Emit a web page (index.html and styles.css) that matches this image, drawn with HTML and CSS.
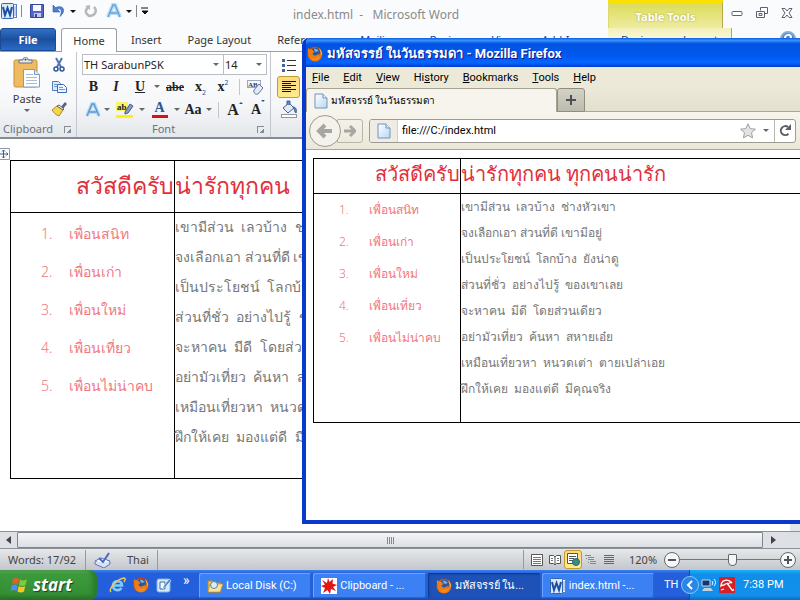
FILE: index.html
```html
<!DOCTYPE html>
<html lang="th">
<head>
<meta charset="utf-8">
<title>index.html - Microsoft Word</title>
<link rel="stylesheet" href="styles.css">
</head>
<body>
<svg class="defs" aria-hidden="true">
  <defs>
    <linearGradient id="gPage" x1="0" y1="0" x2="1" y2="1"><stop offset="0" stop-color="#fff"/><stop offset="1" stop-color="#b9d6f2"/></linearGradient>
    <radialGradient id="gFox" cx=".5" cy=".6" r=".6"><stop offset="0" stop-color="#ffc52e"/><stop offset=".6" stop-color="#f07a12"/><stop offset="1" stop-color="#c23c05"/></radialGradient>
    <symbol id="page" viewBox="0 0 14 16"><path d="M1 1h8l4 4v10H1z" fill="url(#gPage)" stroke="#6f94c4"/><path d="M9 1v4h4" fill="#dcebfa" stroke="#6f94c4"/></symbol>
    <symbol id="fox" viewBox="0 0 16 16"><circle cx="8" cy="8" r="7.5" fill="url(#gFox)"/><circle cx="8.4" cy="6.6" r="4.8" fill="#2c56a0"/><path d="M7 2.5c2 0 4 1 5 3-1-.5-2-.2-2.500.5C8.500 6 7 5 7 2.500z" fill="#6fb4e8"/><path d="M1 2c.8 1 1.700 1.300 3 1.300C5 3.300 5.500 4 6.500 5 8 5.500 7.500 6.500 6 7c-1 1 .5 2.500 2 2.500S11.500 8 12.500 7.500C12 11 9.500 13 7 12.500 3 12 0 8 1 2z" fill="#ef7c13"/><path d="M12 2c2.500 2 3.500 5 2.500 8-.5-3-1-5-2.500-8z" fill="#ffd24a"/></symbol>
    <symbol id="word" viewBox="0 0 16 16"><rect x="4.500" y="1.500" width="11" height="13" fill="#fff" stroke="#5d83bd"/><path d="M13 4h2M13 6h2M13 8h2M13 10h2M13 12h2" stroke="#7da0d2"/><rect x=".5" y=".5" width="12" height="15" rx="1" fill="#d9e9fb" stroke="#3567b0"/><path d="M2 4l2 8 2.500-7L9 12l2-8" fill="none" stroke="#1c4f9f" stroke-width="2"/></symbol>
  </defs>
</svg>
<main class="desktop">
  <section class="word" aria-label="Microsoft Word">
    <header class="word-title">
      <div class="quick">
        <svg width="16" height="16"><use href="#word"/></svg>
        <i class="bar"></i>
        <button class="gap" aria-label="Save"><svg width="14" height="14" viewBox="0 0 14 14"><path d="M.5.5h13v13h-13z" fill="#5766c6" stroke="#37449c"/><path d="M3 1h8v6H3z" fill="#f6f8ff"/><path d="M4 9h7v4H4z" fill="#c3c9ea"/><path d="M5 10h2v3H5z" fill="#37449c"/></svg></button>
        <button class="gap" aria-label="Undo"><svg width="14" height="14" viewBox="0 0 14 14"><path d="M1 1v7h7L5.500 5.500C8 3.500 11 6 8 12.500 14 8 12.500 0 3.500 3.500z" fill="#4d7fd3" stroke="#2c58ac" stroke-width=".6"/></svg></button>
        <i class="arrow dark"></i>
        <button class="gap" aria-label="Repeat"><svg width="14" height="14" viewBox="0 0 14 14"><path d="M4 3.500C-1 8 4 13 8 11.500c4-1 5-6 2-8.500" fill="none" stroke="#b5b8bc" stroke-width="2.500"/><path d="M6 1v5L1 2z" fill="#b5b8bc"/></svg></button>
        <button class="gap" aria-label="Text Effects"><svg width="16" height="16" viewBox="0 0 16 16"><path d="M2 14L7 2h2l5 12M4.500 10h7" fill="none" stroke="#b9dcf5" stroke-width="4"/><path d="M2 14L7 2h2l5 12M4.500 10h7" fill="none" stroke="#6aa5d8" stroke-width="1.500"/></svg></button>
        <i class="arrow dark"></i>
        <i class="bar"></i>
        <svg width="8" height="8" viewBox="0 0 8 8"><path d="M0 1h7M1 4h6L4 7z" stroke="#111" fill="#111"/></svg>
      </div>
      <h1>index.html&nbsp; -&nbsp; &nbsp;Microsoft Word</h1>
      <strong class="context">Table Tools</strong>
      <div class="controls">
        <button aria-label="Minimize"><svg width="12" height="12" viewBox="0 0 12 12"><rect x="1" y="4.500" width="10" height="4" rx="1" fill="#fff" stroke="#596273"/></svg></button>
        <button aria-label="Restore"><svg width="12" height="12" viewBox="0 0 12 12"><path d="M4.500 3.500v-3h7v6h-3" fill="#fff" stroke="#596273"/><path d="M.5 4.500h8v6h-8z" fill="#fff" stroke="#596273"/><path d="M3 6.500h3v2H3z" fill="none" stroke="#596273"/></svg></button>
        <button aria-label="Close"><svg width="12" height="12" viewBox="0 0 12 12"><path d="M1 1.500h3l2 2.500 2-2.500h3L8 6l3 4.500H8L6 8l-2 2.500H1L4 6z" fill="#fff" stroke="#596273"/></svg></button>
      </div>
    </header>
    <nav class="tabs">
      <button class="file">File</button>
      <button class="home">Home</button>
      <button>Insert</button>
      <button>Page Layout</button>
      <button>References</button>
      <button class="blue">Mailings</button>
      <button class="blue">Review</button>
      <button class="blue">View</button>
      <button class="blue">Add-Ins</button>
      <span class="tool-tabs"><button class="blue">Design</button><button class="blue">Layout</button></span>
      <button class="help" aria-label="Help"><svg width="16" height="16" viewBox="0 0 16 16"><circle cx="8" cy="8" r="7" fill="#4d83cd" stroke="#88abd9" stroke-width="2"/><path d="M5 7c0-4 6-4 6-1 0 2-3 2-3 4v2" fill="none" stroke="#fff" stroke-width="2"/></svg></button>
    </nav>
    <div class="ribbon">
      <section class="group clipboard">
        <div class="clip-body">
          <button class="paste">
            <svg width="28" height="32" viewBox="0 0 28 32"><rect x="1" y="3" width="23" height="27" rx="1.500" fill="#eebb62" stroke="#c98f34"/><path d="M6 6V3h4c0-4 5-4 5 0h4v3z" fill="#e4e6e9" stroke="#6c7179"/><circle cx="12.500" cy="2.500" r="1" fill="#444"/><path d="M10.500 12.500h11l5 5V30h-16z" fill="#fff" stroke="#7b9cc6"/><path d="M21.500 12.500v5h5" fill="#dce9f8" stroke="#7b9cc6"/><path d="M13 17.500h7M13 20.500h11M13 23.500h11M13 26.500h11" stroke="#a9bddb"/></svg>
            <span>Paste</span><i class="arrow"></i>
          </button>
          <div class="small-tools">
            <button aria-label="Cut"><svg width="16" height="16" viewBox="0 0 16 16"><path d="M5 1l5 9M11 1L6 10" stroke="#4d77b6" stroke-width="2"/><circle cx="5" cy="12" r="2" fill="none" stroke="#2d5598" stroke-width="1.500"/><circle cx="11" cy="12" r="2" fill="none" stroke="#2d5598" stroke-width="1.500"/></svg></button>
            <button aria-label="Copy"><svg width="16" height="16" viewBox="0 0 16 16"><path d="M1.500 2.500h6l2 2v7h-8z" fill="#dceafb" stroke="#4e7dc0"/><path d="M6.500 5.500h6l3 3v5h-9z" fill="#eef5ff" stroke="#3c6cb4"/><path d="M3 5.500h3M3 7.500h3M8 8.500h4M8 10.500h6" stroke="#6f97d0"/></svg></button>
            <button aria-label="Format Painter"><svg width="16" height="16" viewBox="0 0 16 16"><path d="M9 7l5-6 2 2-5 6z" fill="#56637c"/><path d="M1 9l5-4 6 4-4 6c-3-1-5-3-7-6z" fill="#f5d64b" stroke="#a88b28"/><path d="M6 5l2-1 5 4-1 1z" fill="#fff" stroke="#666"/></svg></button>
          </div>
        </div>
        <h2>Clipboard <i class="launcher"></i></h2>
      </section>
      <section class="group font">
        <div class="combos">
          <label class="combo family"><select aria-label="Font"><option>TH SarabunPSK</option></select><i class="arrow"></i></label>
          <label class="combo size"><select aria-label="Font Size"><option>14</option></select><i class="arrow"></i></label>
        </div>
        <div class="tools row-a">
          <button><b>B</b></button><button><em>I</em></button><button><u>U</u></button><i class="arrow"></i><button class="abc"><s>abe</s></button><button>x<sub>2</sub></button><button>x<sup>2</sup></button><i class="divider"></i>
          <button aria-label="Clear Formatting"><svg width="18" height="18" viewBox="0 0 18 18"><rect x="1.500" y="2.500" width="13" height="7" fill="#f4f6fb" stroke="#9aa7be"/><text x="2" y="9" font-size="7" font-weight="bold" fill="#34405c">AB</text><path d="M8 12l5-6 4 4-5 6c-2 1-5-1-4-4z" fill="#e4e9f7" stroke="#6476a5"/></svg></button>
        </div>
        <div class="tools row-b">
          <button aria-label="Text Effects"><svg width="16" height="16" viewBox="0 0 16 16"><path d="M2 14L7 2h2l5 12M4.500 10h7" fill="none" stroke="#b9dcf5" stroke-width="4"/><path d="M2 14L7 2h2l5 12M4.500 10h7" fill="none" stroke="#5b9bd2" stroke-width="1.500"/></svg></button><i class="arrow"></i>
          <button class="hl" aria-label="Highlight"><svg width="18" height="18" viewBox="0 0 18 18"><path d="M0 1h12v9H0z" fill="#f8f36a"/><path d="M0 14h17v3H0z" fill="#fbf300"/><text x="1" y="9" font-size="9" fill="#222">ab</text><path d="M9 11l5-8 3 2-5 7-3 1z" fill="#879bc7" stroke="#485b85"/></svg></button><i class="arrow"></i>
          <button class="color">A</button><i class="arrow"></i>
          <button>Aa</button><i class="arrow"></i><i class="divider"></i>
          <button class="grow">A<i class="tri up"></i></button>
          <button class="shrink">A<i class="tri down"></i></button>
        </div>
        <h2>Font <i class="launcher"></i></h2>
      </section>
      <section class="group paragraph">
        <button aria-label="Bullets"><svg width="16" height="16" viewBox="0 0 16 16"><path d="M6 3.500h9M6 8.500h9M6 13.500h9" stroke="#333"/><path d="M1 2h3v3H1zM1 7h3v3H1zM1 12h3v3H1z" fill="#47639b"/></svg></button>
        <button class="on" aria-label="Align Left"><svg width="16" height="14" viewBox="0 0 16 14"><path d="M1 1.500h14M1 3.500h9M1 5.500h14M1 7.500h9M1 9.500h14M1 11.500h9" stroke="#111"/></svg></button>
        <button aria-label="Shading"><svg width="18" height="18" viewBox="0 0 18 18"><path d="M3 8l6-5 5 5-6 5z" fill="#e1eaf6" stroke="#45628f"/><path d="M7 5V1h3v4M13 7c3 0 4 3 3 6-2-1-1-4-3-6z" fill="#6287c2" stroke="#45628f"/><rect x="1.500" y="14.500" width="15" height="3" fill="#fff" stroke="#8d96a5"/></svg></button>
      </section>
    </div>
    <div class="paper">
      <div class="sheet">
        <svg class="handle" width="10" height="12" viewBox="0 0 10 12"><path d="M0 .5h9.500v11H0" fill="#fff" stroke="#8c9cb5"/><path d="M3.500 2v8M0 6h8M2 3.500L3.500 2 5 3.500M2 8.500L3.500 10 5 8.500M6.500 4.500L8 6 6.500 7.500" fill="none" stroke="#3a5b96"/></svg>
        <table class="poem">
          <tr><th>สวัสดีครับ</th><th>น่ารักทุกคน</th></tr>
          <tr>
            <td><ol><li>เพื่อนสนิท</li><li>เพื่อนเก่า</li><li>เพื่อนใหม่</li><li>เพื่อนเที่ยว</li><li>เพื่อนไม่น่าคบ</li></ol></td>
            <td><p>เขามีส่วน &nbsp;เลวบ้าง &nbsp;ช่างหัวเขา</p><p>จงเลือกเอา ส่วนที่ดี เขามีอยู่</p><p>เป็นประโยชน์ &nbsp;โลกบ้าง &nbsp;ยังน่าดู</p><p>ส่วนที่ชั่ว &nbsp;อย่างไปรู้ &nbsp;ของเขาเลย</p><p>จะหาคน &nbsp;มีดี &nbsp;โดยส่วนเดียว</p><p>อย่ามัวเที่ยว &nbsp;ค้นหา &nbsp;สหายเอ๋ย</p><p>เหมือนเที่ยวหา &nbsp;หนวดเต่า &nbsp;ตายเปล่าเอย</p><p>ฝึกให้เคย &nbsp;มองแต่ดี &nbsp;มีคุณจริง</p></td>
          </tr>
        </table>
      </div>
      <div class="vscroll"></div>
    </div>
    <div class="hscroll">
      <button aria-label="Scroll left"><i class="side left"></i></button>
      <div class="thumb"><i></i><i></i><i></i><i></i></div>
      <button aria-label="Scroll right"><i class="side right"></i></button>
    </div>
    <footer class="status">
      <span class="words">Words: 17/92</span>
      <span class="proof"><svg width="18" height="16" viewBox="0 0 18 16"><path d="M1 9l6-3 9 3-6 5z" fill="#fff" stroke="#6272ae"/><path d="M1 10v2l9 4 6-4v-2" fill="#dce2f5" stroke="#6272ae"/><path d="M5 6l4 4 6-9" fill="none" stroke="#4b6ac0" stroke-width="2"/></svg></span>
      <span class="lang">Thai</span>
      <div class="views">
        <button aria-label="Print Layout"><svg width="12" height="12" viewBox="0 0 12 12"><path d="M.5.500h11v11H.5z" fill="#fff" stroke="#555"/><path d="M2 3.500h8M2 5.500h8M2 7.500h8M2 9.500h8" stroke="#777"/></svg></button>
        <button aria-label="Full Screen Reading"><svg width="12" height="12" viewBox="0 0 12 12"><path d="M.5 1.500h4L6 3l1.500-1.500h4v8h-4L6 11 4.500 9.500h-4zM6 3v8" fill="#fff" stroke="#555"/><path d="M2 4.500h2M2 6.500h2M8 4.500h2M8 6.500h2" stroke="#777"/></svg></button>
        <button class="on" aria-label="Web Layout"><svg width="13" height="13" viewBox="0 0 13 13"><path d="M.5.500h10v10H.5z" fill="#fff" stroke="#555"/><path d="M2 3.500h7M2 5.500h5M2 7.500h4" stroke="#555"/><circle cx="9" cy="9" r="3.500" fill="#3d8f72" stroke="#2564a4"/></svg></button>
        <button aria-label="Outline"><svg width="12" height="12" viewBox="0 0 12 12"><path d="M0 1.500h6M3 3.500h6M3 5.500h6M5 7.500h6M5 9.500h6M1 4.500h1M3 8.500h1" stroke="#888"/></svg></button>
        <button aria-label="Draft"><svg width="12" height="12" viewBox="0 0 12 12"><path d="M1 1.500h10M1 3.500h10M1 5.500h10M1 7.500h10M1 9.500h10" stroke="#666"/></svg></button>
      </div>
      <span class="percent">120%</span>
      <button class="round" aria-label="Zoom Out"><svg width="16" height="16" viewBox="0 0 16 16"><circle cx="8" cy="8" r="7.500" fill="#f7f8f9" stroke="#63676c"/><path d="M4 8h8" stroke="#555" stroke-width="2"/></svg></button>
      <input type="range" min="0" max="100" value="53" aria-label="Zoom">
      <button class="round" aria-label="Zoom In"><svg width="16" height="16" viewBox="0 0 16 16"><circle cx="8" cy="8" r="7.500" fill="#f7f8f9" stroke="#63676c"/><path d="M4 8h8M8 4v8" stroke="#555" stroke-width="2"/></svg></button>
    </footer>
  </section>

  <section class="firefox" aria-label="Mozilla Firefox">
    <header class="ff-title"><svg width="16" height="16"><use href="#fox"/></svg><h1>มหัสจรรย์ ในวันธรรมดา - Mozilla Firefox</h1></header>
    <nav class="menu"><button><u>F</u>ile</button><button><u>E</u>dit</button><button><u>V</u>iew</button><button>Hi<u>s</u>tory</button><button><u>B</u>ookmarks</button><button><u>T</u>ools</button><button><u>H</u>elp</button></nav>
    <div class="ff-tabs">
      <button class="ff-tab"><svg width="14" height="16"><use href="#page"/></svg>มหัสจรรย์ ในวันธรรมดา</button>
      <button class="new" aria-label="New Tab"><svg width="12" height="12" viewBox="0 0 12 12"><path d="M1 6h10M6 1v10" stroke="#4b4f55" stroke-width="2"/></svg></button>
    </div>
    <div class="ff-bar">
      <button class="back" aria-label="Back"><svg width="18" height="18" viewBox="0 0 18 18"><path d="M9 3L3 9l6 6M4 9h12" fill="none" stroke="#a6a6a2" stroke-width="4"/></svg></button>
      <button class="fwd" aria-label="Forward"><svg width="12" height="14" viewBox="0 0 12 14"><path d="M6 2l5 5-5 5M0 7h10" fill="none" stroke="#a6a6a2" stroke-width="3"/></svg></button>
      <div class="url">
        <span class="ident"><svg width="14" height="16"><use href="#page"/></svg></span>
        <input type="text" value="file:///C:/index.html" aria-label="Address">
        <svg width="16" height="16" viewBox="0 0 16 16"><path d="M8 .8l2.200 4.800 5.200.6-3.900 3.500 1.100 5.200L8 12.300l-4.600 2.600 1.100-5.200L.6 6.200l5.200-.6z" fill="#e3e3e3" stroke="#9f9f9f"/></svg>
        <i class="arrow"></i>
        <button class="reload" aria-label="Reload"><svg width="13" height="13" viewBox="0 0 13 13"><path d="M9.500 9.800A4.500 4.500 0 1 1 9 3" fill="none" stroke="#5c6066" stroke-width="2"/><path d="M12 0v6H6z" fill="#5c6066"/></svg></button>
      </div>
    </div>
    <div class="ff-page">
      <table class="poem">
        <tr><th>สวัสดีครับ</th><th>น่ารักทุกคน ทุกคนน่ารัก</th></tr>
        <tr>
          <td><ol><li>เพื่อนสนิท</li><li>เพื่อนเก่า</li><li>เพื่อนใหม่</li><li>เพื่อนเที่ยว</li><li>เพื่อนไม่น่าคบ</li></ol></td>
          <td><p>เขามีส่วน &nbsp;เลวบ้าง &nbsp;ช่างหัวเขา</p><p>จงเลือกเอา ส่วนที่ดี เขามีอยู่</p><p>เป็นประโยชน์ &nbsp;โลกบ้าง &nbsp;ยังน่าดู</p><p>ส่วนที่ชั่ว &nbsp;อย่างไปรู้ &nbsp;ของเขาเลย</p><p>จะหาคน &nbsp;มีดี &nbsp;โดยส่วนเดียว</p><p>อย่ามัวเที่ยว &nbsp;ค้นหา &nbsp;สหายเอ๋ย</p><p>เหมือนเที่ยวหา &nbsp;หนวดเต่า &nbsp;ตายเปล่าเอย</p><p>ฝึกให้เคย &nbsp;มองแต่ดี &nbsp;มีคุณจริง</p></td>
        </tr>
      </table>
    </div>
  </section>

  <footer class="taskbar">
    <button class="start"><svg width="18" height="18" viewBox="0 0 18 18"><path d="M3 3c2-1.500 4-1.500 6 0L8 8.500c-2-1.500-4-1.500-6 0z" fill="#ee5b2a"/><path d="M10 3.500c2 1.300 4 1.300 7 0L15.500 9c-2 1.300-4.500 1.300-6.500 0z" fill="#7fcb3c"/><path d="M1.700 9.500c2-1.500 4-1.500 6 0l-1.200 5.500c-2-1.500-4-1.500-6 0z" fill="#4f8df0"/><path d="M8.700 10c2 1.300 4.500 1.300 6.500 0L14 15.500c-2 1.300-4.500 1.300-6.500 0z" fill="#fbc722"/></svg>start</button>
    <div class="launch">
      <button aria-label="Internet Explorer"><svg width="17" height="16" viewBox="0 0 17 16"><path d="M4 8.500h9C13 3 4.500 2.500 4 8.500c0 5 6 6 8.500 2.500" fill="none" stroke="#7ecbff" stroke-width="2.600"/><path d="M2 15C-1 12 8 2 15 1c2 0 1 2.500 0 4" fill="none" stroke="#f1c84a" stroke-width="1.500"/></svg></button>
      <button aria-label="Firefox"><svg width="16" height="16"><use href="#fox"/></svg></button>
      <button aria-label="Show Desktop"><svg width="16" height="16" viewBox="0 0 16 16"><rect x="1" y="2" width="13" height="13" rx="2" fill="#d6eafa" stroke="#7fb6e4"/><path d="M4 5h5v7H4z" fill="#fff" stroke="#316bab"/><path d="M7 10l6-8 2 1.500-6 7-2 1z" fill="#4d83c4" stroke="#fff" stroke-width=".5"/></svg></button>
      <span>»</span>
    </div>
    <div class="tasks">
      <button><svg width="16" height="16" viewBox="0 0 16 16"><path d="M1 3h5l1 2h7v9H1z" fill="#f4c95c" stroke="#b98522"/><path d="M3 6h13l-3 8H1z" fill="#fbe39a" stroke="#b98522" stroke-width=".6"/><circle cx="7" cy="7" r="3.500" fill="#d8effb" stroke="#657f9c"/></svg><span>Local Disk (C:)</span></button>
      <button><svg width="16" height="16" viewBox="0 0 16 16"><path d="M0 0h16v16H0z" fill="#fff"/><path d="M7 0l1.500 4L12 1l-.5 4.500L16 7l-4 2 3 4-5-2-1 5-2.500-4L2 15l2-5-4-2 4-1.500L1 2l5 3z" fill="#e31414"/></svg><span>Clipboard - ...</span></button>
      <button class="active"><svg width="16" height="16"><use href="#fox"/></svg><span>มหัสจรรย์ ใน...</span></button>
      <button><svg width="16" height="16"><use href="#word"/></svg><span>index.html -...</span></button>
    </div>
    <span class="th">TH</span>
    <div class="tray">
      <button class="chev" aria-label="Show hidden icons"><svg width="18" height="18" viewBox="0 0 18 18"><circle cx="9" cy="9" r="8.500" fill="#2a86e6" stroke="#8ac7f8"/><path d="M11 5L7 9l4 4" fill="none" stroke="#fff" stroke-width="2"/></svg></button>
      <svg width="16" height="16" viewBox="0 0 16 16"><path d="M1 3h8v6H1z" fill="#1b3468" stroke="#c3d8ee"/><path d="M3 11h7l2 3H1z" fill="#c3d0dd"/><path d="M11 4c1 1 1 3 0 4M13 2c2 2 2 5 0 7" fill="none" stroke="#e8f5ff"/></svg>
      <svg width="16" height="16" viewBox="0 0 16 16"><rect width="16" height="16" rx="1" fill="#d91f26"/><path d="M2 9C2 3 9 1 13 6c-2-1-3 0-4 1-2-1-3 0-4 1-1 0-2 0-3 1z" fill="none" stroke="#fff" stroke-width="1.300"/><path d="M8 6l5 7c1 1 2 0 1-1M2 13l3-1" fill="none" stroke="#fff" stroke-width="1.300"/></svg>
      <time>7:38 PM</time>
    </div>
  </footer>
</main>
</body>
</html>
```
FILE: styles.css
```css
* { box-sizing: border-box; }
body { margin: 0; font: 11px/14px "Noto Sans", sans-serif; color: #3b3b3b; }
button { border: 0; padding: 0; margin: 0; background: none; font: inherit; color: inherit; }
h1, h2, p { margin: 0; font: inherit; }
svg { display: block; flex: none; }
.defs { position: absolute; width: 0; height: 0; }
.desktop { position: relative; display: flex; flex-direction: column; height: 100vh; min-height: 600px; overflow: hidden; }
.word { flex: 1; min-height: 0; display: flex; flex-direction: column; background: #fafbfc; }

.arrow { flex: none; width: 0; height: 0; border: 3px solid transparent; border-top-color: #666; border-bottom: 0; }
.arrow.dark { border-top-color: #111; }

/* Word title bar */
.word-title { display: flex; height: 28px; flex: none; }
.quick { display: flex; align-items: center; gap: 4px; height: 22px; padding-left: 1px; flex: 0 0 293px; }
.quick .bar { width: 1px; height: 12px; background: #888; }
.quick .gap { margin-left: 4px; }
.word-title h1 { flex: 1; font-size: 12px; line-height: 29px; color: #8a8a8a; white-space: nowrap; }
.context { width: 115px; border-top: 4px solid #fde000; border-right: 1px solid #b5a94c; border-left: 1px solid #e0d96e; background: linear-gradient(#dcdc5c, #eeeca0); color: #fff; font-size: 11px; line-height: 26px; text-align: center; text-shadow: 0 0 2px #a89e30; }
.controls { display: flex; gap: 13px; width: 77px; padding: 7px 0 0 8px; align-items: flex-start; }

/* Ribbon tabs */
.tabs { display: flex; height: 24px; flex: none; border-bottom: 1px solid #9a9fa6; white-space: nowrap; }
.tabs button { flex: none; padding: 0 13px; color: #333; }
.tabs .blue { color: #1c3d8f; }
.tabs .file { width: 56px; margin-right: 5px; background: linear-gradient(#3271c4, #1c4f9f 50%, #2b6cc6); border: 1px solid #1b4a94; border-radius: 3px 3px 0 0; color: #fff; font-weight: bold; }
.tabs .home { width: 56px; padding: 0; margin: 0 1px -1px 0; background: #fff; border: 1px solid #9a9fa6; border-bottom: 0; border-radius: 3px 3px 0 0; }
.tool-tabs { display: flex; margin-left: auto; width: 124px; background: linear-gradient(#f3f1b8, #fff); border-right: 1px solid #b5a94c; }
.tabs .help { padding: 3px 4px 0 48px; align-self: flex-start; }

.ribbon { display: flex; height: 87px; flex: none; background: linear-gradient(#fff, #f6f7f9 60%, #e4e7eb); border-bottom: 2px solid #868b92; }
.group { display: flex; flex-direction: column; border-right: 1px solid #c3c7cd; flex: none; }
.group h2 { display: flex; justify-content: center; align-items: center; margin-top: auto; height: 16px; color: #6a727d; }
.launcher { width: 7px; height: 7px; border-top: 1px solid #858c96; border-left: 1px solid #858c96; background: linear-gradient(135deg, transparent 60%, #858c96 60%); margin-left: auto; }
.clipboard { width: 77px; }
.clip-body { display: flex; padding: 5px 0 0 8px; gap: 5px; }
.paste { width: 38px; display: flex; flex-direction: column; align-items: center; gap: 3px; }
.clipboard h2 { padding: 0 5px 0 3px; }
.small-tools { display: flex; flex-direction: column; gap: 6px; }
.font { width: 194px; padding-left: 5px; }
.font h2 { padding: 0 6px 0 70px; }
.combos { display: flex; height: 23px; padding-top: 2px; }
.combo { display: flex; align-items: center; height: 21px; border: 1px solid #b9bec5; background: #fff; }
.combo select { flex: 1; min-width: 0; appearance: none; border: 0; padding: 0 0 0 1px; background: none; font: 11px/16px "Noto Sans", sans-serif; color: #222; }
.combo .arrow { margin-right: 4px; }
.family { width: 142px; }
.size { width: 43px; border-left: 0; }
.tools { display: grid; align-items: center; justify-items: center; height: 23px; font: bold 14px/20px "Liberation Serif", serif; color: #222; }
.row-a { grid-template-columns: 23px 22px 26px 8px 28px 23px 22px 10px 22px; }
.row-b { grid-template-columns: 21px 8px 27px 8px 27px 8px 24px 8px 10px 24px 22px; }
.tools .abc { font-size: 12px; }
.tools sub, .tools sup { font: 7px/7px "Noto Sans", sans-serif; color: #2d5598; }
.divider { width: 1px; height: 16px; background: #c3c7cd; }
.color { width: 16px; line-height: 14px; color: #33538f; border-bottom: 3px solid #e30b13; }
.grow, .shrink { display: flex; }
.tools .grow { font-size: 16px; }
.tri { width: 0; height: 0; border: 2px solid transparent; }
.up { border-bottom-color: #33538f; }
.down { border-top-color: #33538f; }
.paragraph { width: 200px; align-items: flex-start; padding: 2px 0 0 6px; border: 0; }
.paragraph button { width: 23px; height: 22px; display: grid; place-items: center; }
.paragraph .on, .views .on { background: linear-gradient(#fbd981, #fdeb8e); border: 1px solid #c29b29; border-radius: 3px; }

/* Documents */
.paper { flex: 1; min-height: 0; display: flex; background: #fff; overflow: hidden; }
.sheet { flex: 1; padding: 21px 0 0 10px; position: relative; }
.handle { position: absolute; left: 0; top: 9px; }
.vscroll { width: 17px; background: #e3e6ea; }
.poem { border-collapse: collapse; table-layout: fixed; font-family: "Noto Sans", sans-serif; font-weight: 300; white-space: nowrap; }
.poem th, .poem td { border: 1px solid #000; padding: 0; vertical-align: top; text-align: left; }
.poem th { color: #e0303c; font-weight: 300; }
.poem th:first-child { text-align: right; }
.poem ol { list-style: none; counter-reset: item; margin: 0; padding: 0; color: #f07880; }
.poem li { counter-increment: item; display: flex; }
.poem li::before { content: counter(item) "."; width: 28px; flex: none; }
.sheet .poem { width: 780px; }
.sheet th { height: 52px; font-size: 23px; line-height: 48px; }
.sheet th:first-child { width: 164px; }
.sheet td { height: 266px; font-size: 14px; line-height: 30px; color: #777; }
.sheet td p:first-child { margin-top: -1px; }
.sheet ol { padding: 2px 0 0 30px; }
.sheet li { line-height: 38px; }

.hscroll { display: flex; height: 17px; flex: none; background: #dde1e6; border-top: 1px solid #8d929a; }
.hscroll button { width: 17px; display: grid; place-items: center; }
.hscroll .thumb { flex: 1; display: flex; align-items: center; justify-content: center; gap: 1px; border: 1px solid #7f858e; border-radius: 1px; background: linear-gradient(#f3f5f7, #dcdfe3); }
.hscroll .thumb i { width: 1px; height: 7px; background: #888; }
.hscroll button:last-child { width: 20px; margin-right: 17px; }
.side { width: 0; height: 0; border: 4px solid transparent; }
.left { border-right: 5px solid #444; border-left: 0; }
.right { border-left: 5px solid #444; border-right: 0; }

.status { display: flex; align-items: center; height: 22px; flex: none; padding: 0 4px 0 8px; background: linear-gradient(#e6e8ea, #c3c7cb); border-top: 1px solid #8d929a; color: #444; }
.words { width: 78px; border-right: 1px solid #999; line-height: 20px; white-space: nowrap; }
.proof { width: 41px; padding-left: 8px; }
.lang { width: 31px; border-right: 1px solid #999; line-height: 20px; }
.views { display: flex; margin-left: auto; padding-left: 4px; border-left: 1px solid #999; }
.views button { width: 18px; height: 19px; display: grid; place-items: center; }
.percent { width: 46px; padding-left: 11px; }
.status input { appearance: none; width: 100px; height: 16px; margin: 0; background: linear-gradient(#777, #777) center / 100% 1px no-repeat; }
.status input::-webkit-slider-thumb { appearance: none; width: 9px; height: 12px; border: 1px solid #666; border-radius: 1px 1px 4px 4px; background: #f4f5f6; }

/* Browser window */
.firefox { position: absolute; left: 302px; top: 38px; right: 0; height: 486px; display: flex; flex-direction: column; border: solid #0838cc; border-width: 0 0 4px 4px; border-radius: 7px 0 0 0; overflow: hidden; background: #ece9d8; font-family: Roboto, "Noto Sans", sans-serif; color: #000; }
.ff-title { display: flex; align-items: center; gap: 4px; height: 29px; flex: none; padding: 3px 0 0 1px; background: linear-gradient(#0a5be0, #3a93ff 8%, #0253e2 20%, #0058ee 60%, #0566ff 85%, #003dd0); }
.ff-title h1 { color: #fff; font: bold 13px/18px Roboto, "Noto Sans", sans-serif; text-shadow: 1px 1px #0f1089; white-space: nowrap; }
.menu { display: flex; gap: 14px; height: 21px; flex: none; padding-left: 6px; }
.ff-tabs { display: flex; align-items: flex-end; height: 24px; flex: none; box-shadow: inset 0 -1px #a9a799; background: linear-gradient(#ece9d8, #e2dfcf); }
.ff-tab { display: flex; align-items: center; gap: 3px; width: 251px; height: 24px; padding-left: 7px; border: 1px solid #a5a394; border-bottom: 0; border-radius: 3px 3px 0 0; background: #f6f4ec; font-size: 10px; }
.new { display: grid; place-items: center; width: 28px; height: 24px; border: 1px solid #8f8e83; border-radius: 3px 3px 0 0; background: linear-gradient(#d4d2c4, #bdbbae); }
.ff-bar { display: flex; align-items: center; height: 38px; flex: none; padding: 0 4px 0 3px; background: linear-gradient(#f6f4ec, #ebe8d9); border-bottom: 1px solid #a9a799; }
.back { display: grid; place-items: center; width: 32px; height: 32px; border: 1px solid #9c9b93; border-radius: 50%; background: #f4f2ea; z-index: 1; }
.fwd { display: grid; place-items: center; width: 26px; height: 24px; margin-left: -4px; border: 1px solid #b9b7aa; border-radius: 0 3px 3px 0; }
.url { flex: 1; display: flex; align-items: center; height: 24px; margin-left: 6px; border: 1px solid #9c9b93; border-radius: 3px; background: #fff; overflow: hidden; }
.ident { display: grid; place-items: center; width: 28px; height: 22px; background: #eeece3; border-right: 1px solid #d4d2c8; }
.url input { flex: 1; min-width: 0; border: 0; padding: 0 0 0 4px; font: 11px/16px Roboto, sans-serif; color: #000; background: none; }
.url .arrow { margin: 0 5px 0 7px; }
.reload { display: grid; place-items: center; width: 21px; height: 22px; border-left: 1px solid #b9b7aa; }
.ff-page { flex: 1; min-height: 0; padding: 8px 0 0 7px; background: #fff; }
.ff-page .poem { width: 100%; border-right: 0; }
.ff-page th:last-child, .ff-page td:last-child { border-right: 0; }
.ff-page th { height: 35px; font-size: 20px; line-height: 30px; }
.ff-page th:first-child { width: 147px; }
.ff-page td { height: 229px; font-size: 12px; line-height: 26px; color: #777; }
.ff-page ol { padding-left: 25px; }
.ff-page li { line-height: 32px; }
.ff-page li::before { width: 30px; }

/* Taskbar */
.taskbar { display: flex; height: 30px; flex: none; background: linear-gradient(#3b83f0, #245edb 12%, #2360dc 85%, #1b48ac); color: #fff; font-family: Roboto, "Noto Sans", sans-serif; }
.start { display: flex; align-items: center; gap: 5px; width: 97px; padding-left: 10px; border-radius: 0 8px 8px 0; background: linear-gradient(#63b463, #3c9a3c 15%, #358f35 80%, #256b25); font: italic bold 17px/24px "Open Sans", sans-serif; text-shadow: 1px 1px 1px #1d3f1d; box-shadow: inset -4px 0 5px #2a7a2a; }
.launch { display: flex; align-items: center; gap: 7px; width: 102px; padding-left: 12px; }
.launch span { align-self: flex-start; padding: 2px 0 0 4px; font-size: 14px; line-height: 16px; }
.tasks { flex: 1; min-width: 0; display: flex; gap: 2px; padding: 3px 0 2px; }
.tasks button { flex: 1; min-width: 0; display: flex; align-items: center; gap: 3px; padding-left: 8px; border-radius: 2px; background: #3c81f3; box-shadow: inset 1px 1px #6ba4fa, inset -1px -1px #2a62cf; white-space: nowrap; overflow: hidden; }
.tasks .active { background: #1e52b7; box-shadow: inset 1px 1px 2px #0d3686; }
.th { width: 35px; padding: 8px 0 0 10px; }
.tray { display: flex; align-items: center; gap: 2px; width: 111px; background: linear-gradient(#1cb0f3, #0f8eea 15%, #1290ea 85%, #0d6bc0); border-left: 1px solid #0b4ea8; white-space: nowrap; }
.chev { margin-left: -9px; }
.tray time { margin-left: 6px; }
```
